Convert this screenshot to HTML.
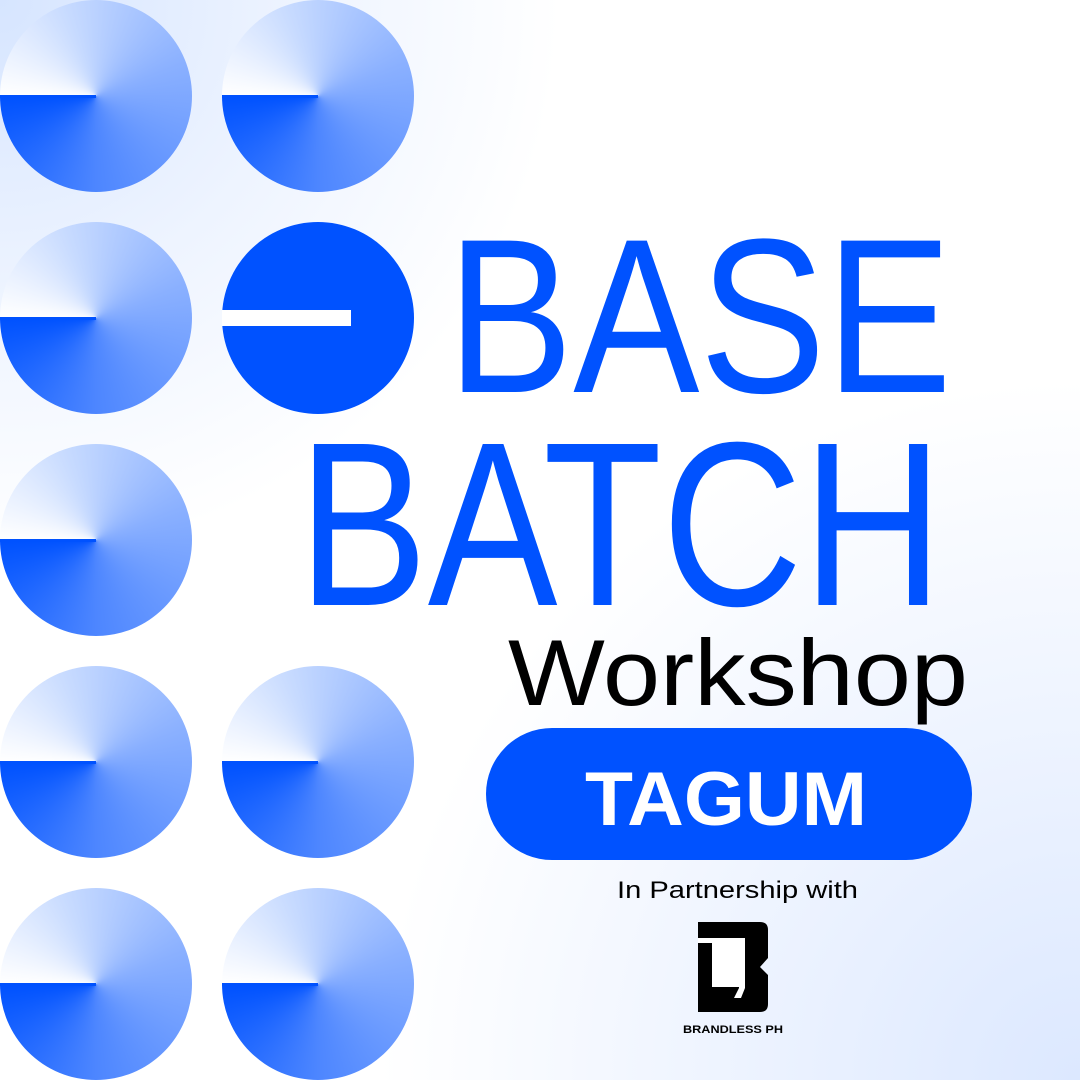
<!DOCTYPE html>
<html><head><style>
html,body{margin:0;padding:0}
body{width:1080px;height:1080px;overflow:hidden;position:relative;
background:radial-gradient(circle at 0 0,#d6e5ff 0,#eef4ff 300px,#fff 560px,rgba(255,255,255,0) 800px),radial-gradient(circle at 100% 100%,#dce8ff 0,#fff 700px);}
.c{position:absolute;width:192px;height:192px;border-radius:50%;background:conic-gradient(from 270deg,#fff 0deg,#c8dbff 70deg,#8ab0ff 160deg,#4d86ff 270deg,#0052ff 359deg);}
.c::after{content:"";position:absolute;left:0;top:95px;width:96px;height:3px;background:#0052ff}
svg{position:absolute;left:0;top:0}
</style></head><body>
<div class="c" style="left:0;top:0"></div>
<div class="c" style="left:222px;top:0"></div>
<div class="c" style="left:0;top:222px"></div>
<div style="position:absolute;left:222px;top:222px;width:192px;height:192px;border-radius:50%;background:#0052ff"></div>
<div style="position:absolute;left:222px;top:310px;width:129px;height:16px;background:#fff"></div>
<div class="c" style="left:0;top:444px"></div>
<div class="c" style="left:0;top:666px"></div>
<div class="c" style="left:222px;top:666px"></div>
<div class="c" style="left:0;top:888px"></div>
<div class="c" style="left:222px;top:888px"></div>
<div style="position:absolute;left:486px;top:728px;width:486px;height:132px;border-radius:66px;background:#0052ff"></div>
<svg width="1080" height="1080" font-family="Liberation Sans, sans-serif">
<text x="447" y="392" font-size="220" fill="#0052ff" textLength="505" lengthAdjust="spacingAndGlyphs">BASE</text>
<text x="298" y="605" font-size="234" fill="#0052ff" textLength="645" lengthAdjust="spacingAndGlyphs">BATCH</text>
<text x="508" y="705" font-size="94" fill="#000" textLength="460" lengthAdjust="spacingAndGlyphs">Workshop</text>
<text x="585" y="825" font-size="76" font-weight="bold" fill="#fff" textLength="282" lengthAdjust="spacingAndGlyphs">TAGUM</text>
<text x="617" y="898" font-size="24" fill="#000" textLength="241" lengthAdjust="spacingAndGlyphs">In Partnership with</text>
<path d="M698 922H760Q768 922 768 930V958L760 967L768 975V1004Q768 1012 760 1012H698Z" fill="#000"/>
<rect x="698" y="938" width="46" height="5" fill="#fff"/>
<rect x="712" y="943" width="30" height="44" fill="#fff"/>
<path d="M739 938H745V988L741 998H734L739 988Z" fill="#fff"/>
<text x="683" y="1033" font-size="11" font-weight="bold" fill="#000" textLength="100" lengthAdjust="spacingAndGlyphs">BRANDLESS PH</text>
</svg>
</body></html>
